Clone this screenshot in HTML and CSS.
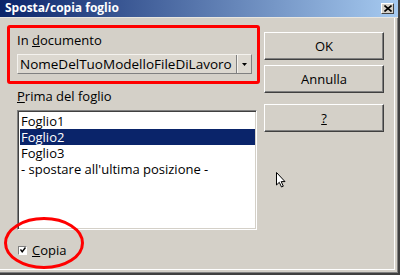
FILE: index.html
```html
<!DOCTYPE html>
<html lang="it">

<head>
    <meta charset="UTF-8">
    <title>Sposta/copia foglio</title>
    <link rel="stylesheet" href="styles.css">
</head>

<body>
    <div class="window">
        <div class="titlebar">
            <span class="title">Sposta/copia foglio</span>
            <span class="close-btn">
                <svg width="8" height="7" viewBox="0 0 8 7">
                    <path d="M0.5 0.5 L7.5 6.5 M7.5 0.5 L0.5 6.5" stroke="#000" stroke-width="1.6" fill="none" />
                </svg>
            </span>
        </div>

        <div class="dialog">
            <div class="left-col">
                <div class="doc-group">
                    <div class="field-label">In <u>d</u>ocumento</div>
                    <div class="combo">
                        <span class="combo-text">NomeDelTuoModelloFileDiLavoro</span>
                        <span class="combo-btn">
                            <svg width="5" height="3" viewBox="0 0 5 3">
                                <path d="M0 0 H5 L2.5 3 Z" fill="#000" />
                            </svg>
                        </span>
                    </div>
                </div>

                <div class="sheet-group">
                    <div class="field-label"><u>P</u>rima del foglio</div>
                    <ul class="listbox">
                        <li>Foglio1</li>
                        <li class="selected">Foglio2</li>
                        <li>Foglio3</li>
                        <li>- spostare all'ultima posizione -</li>
                    </ul>
                </div>

                <div class="check-row">
                    <span class="checkbox">
                        <svg width="6" height="6" viewBox="0 0 6 6">
                            <path d="M0.5 2.5 L2.2 4.8 L5.5 0.5" stroke="#000" stroke-width="1.4" fill="none" />
                        </svg>
                    </span>
                    <span><u>C</u>opia</span>
                </div>
            </div>

            <div class="right-col">
                <button class="btn">OK</button>
                <button class="btn">Annulla</button>
                <button class="btn btn-help"><u>?</u></button>
            </div>

            <!-- annotation ring round the checkbox -->
            <svg class="ring" width="82" height="54" viewBox="0 0 82 54">
                <ellipse cx="41" cy="27" rx="38.5" ry="24.5" stroke="#f00" stroke-width="3" fill="none" />
            </svg>

            <svg class="cursor" width="10" height="16" viewBox="0 0 10 16">
                <path d="M0.5 0.5 V13 L3.3 10.3 L5.5 15 L7.3 14.2 L5.2 9.6 H9 Z" fill="#fff" stroke="#000" stroke-width="1" stroke-linejoin="round" />
            </svg>
        </div>
    </div>
</body>

</html>
```

FILE: styles.css
```css
:root {
    --face: #d4d0c8;
    --shadow: #808080;
    --dark: #404040;
    --select: #0a246a;
}

* {
    box-sizing: border-box;
    margin: 0;
    padding: 0;
}

body {
    font-family: "Open Sans", "DejaVu Sans", sans-serif;
    font-size: 13px;
    line-height: 16px;
    color: #000;
    background: var(--face);
}

.window {
    width: 400px;
    height: 275px;
    background: var(--face);
    border-right: 2px solid var(--dark);
    border-bottom: 2px solid var(--dark);
    box-shadow:
        inset -1px -1px 0 var(--shadow),
        inset -3px -3px 0 var(--face),
        inset -4px -4px 0 #fff;
    position: relative;
    overflow: hidden;
}

.titlebar {
    height: 18px;
    display: flex;
    align-items: center;
    justify-content: space-between;
    padding: 0 4px 1px 5px;
    background: linear-gradient(to right, #0a246a, #a6caf0);
    border-bottom: 1px solid #e8e6e0;
}

.title {
    color: #fff;
    font-weight: bold;
    font-size: 12px;
}

.close-btn {
    width: 13px;
    height: 11px;
    display: flex;
    align-items: center;
    justify-content: center;
    background: var(--face);
    border: 1px solid;
    border-color: #fff var(--dark) var(--dark) #fff;
}

.dialog {
    display: flex;
    gap: 4px;
    padding: 7px 0 0 7px;
}

.left-col {
    width: 253px;
    display: flex;
    flex-direction: column;
}

.doc-group {
    border: 3px solid #f00;
    border-radius: 3px;
    padding: 4px 5px 7px 7px;
}

.field-label {
    margin-bottom: 6px;
}

.combo {
    height: 20px;
    display: flex;
    background: #dcd8d0;
    border: 1px solid;
    border-color: #f4f2ee var(--shadow) var(--shadow) #f4f2ee;
}

.combo-text {
    flex: 1;
    padding-left: 2px;
    font-size: 13.5px;
    line-height: 18px;
    white-space: nowrap;
    overflow: hidden;
}

.combo-btn {
    width: 15px;
    display: flex;
    align-items: center;
    justify-content: center;
    border-left: 1px solid var(--shadow);
    box-shadow: inset 1px 0 0 #f4f2ee;
}

.sheet-group {
    padding: 4px 3px 0 10px;
}

.listbox {
    list-style: none;
    height: 120px;
    background: #fff;
    border: 1px solid;
    border-color: var(--shadow) #fff #fff var(--shadow);
    box-shadow: inset 1px 1px 0 var(--dark), inset -1px -1px 0 var(--face);
    padding: 2px 1px 0 2px;
}

.listbox li {
    height: 16px;
    padding-left: 1px;
    white-space: nowrap;
    overflow: hidden;
}

.listbox li.selected {
    background: var(--select);
    color: #fff;
}

.check-row {
    display: flex;
    align-items: center;
    gap: 5px;
    margin-top: 12px;
    padding-left: 11px;
}

.checkbox {
    width: 9px;
    height: 9px;
    display: flex;
    align-items: center;
    justify-content: center;
    background: #fff;
    border: 1px solid;
    border-color: var(--shadow) #fff #fff var(--shadow);
}

.right-col {
    width: 120px;
    display: flex;
    flex-direction: column;
    gap: 5px;
    padding-top: 7px;
}

.btn {
    height: 28px;
    font: inherit;
    color: #000;
    background: var(--face);
    border: 1px solid;
    border-color: #fff var(--dark) var(--dark) #fff;
    box-shadow: inset -1px -1px 0 var(--shadow);
}

.btn-help {
    margin-top: 6px;
}

.ring {
    position: absolute;
    left: 3px;
    top: 216px;
}

.cursor {
    position: absolute;
    left: 276px;
    top: 172px;
}
```
